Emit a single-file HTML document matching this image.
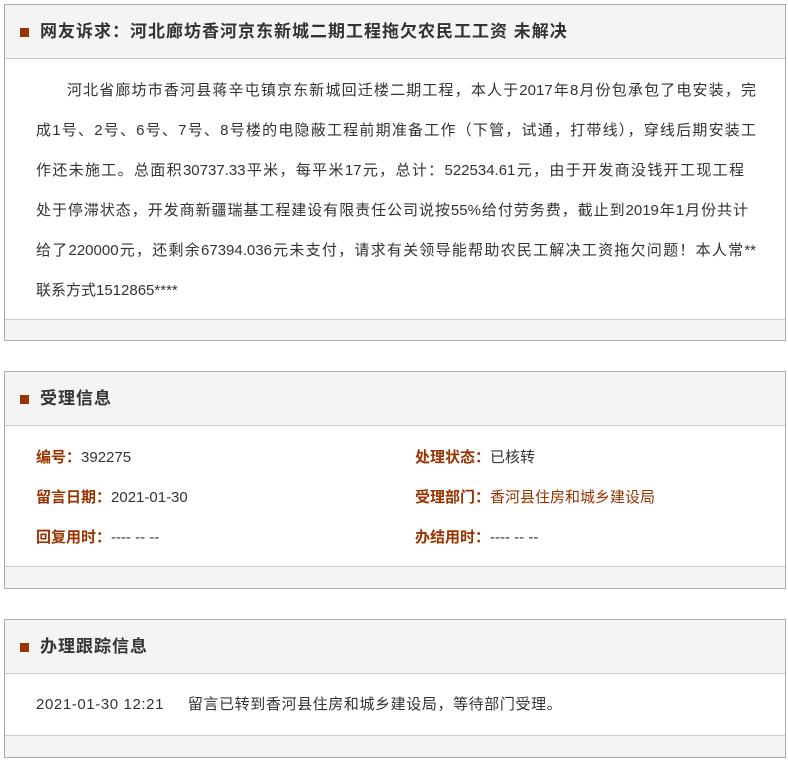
<!DOCTYPE html>
<html><head><meta charset="utf-8"><style>
*{margin:0;padding:0;box-sizing:border-box}
body{width:788px;height:762px;background:#fff;font-family:"Liberation Sans","Noto Sans CJK SC",sans-serif;color:#333;position:relative;overflow:hidden}
.box{position:absolute;left:4px;width:782px;border:1px solid #aaa;background:#f4f4f4}
.hd{height:54px;border-bottom:1px solid #ccc;position:relative;font-weight:bold;font-size:17px;letter-spacing:1px;color:#333;line-height:54px;padding-left:35px}
.hd:before{content:"";position:absolute;left:15px;top:23px;width:9px;height:9px;background:#993300}
.bd{background:#fff;border-bottom:1px solid #ccc;font-size:15px}
.ln{white-space:nowrap;height:40px;line-height:40px}
.j{text-align:justify;text-align-last:justify;white-space:normal;width:720px}
.lab{color:#993300;font-weight:bold}
.col{position:absolute}
</style></head><body>
<div class="box" style="top:4px;height:337px">
<div class="hd">网友诉求：河北廊坊香河京东新城二期工程拖欠农民工工资 未解决</div>
<div class="bd" style="height:261px;padding:12px 0 0 31px">
<div class="ln j" style="padding-left:31px">河北省廊坊市香河县蒋辛屯镇京东新城回迁楼二期工程，本人于2017年8月份包承包了电安装，完</div>
<div class="ln j">成1号、2号、6号、7号、8号楼的电隐蔽工程前期准备工作（下管，试通，打带线），穿线后期安装工</div>
<div class="ln j" style="width:708px">作还未施工。总面积30737.33平米，每平米17元，总计：522534.61元，由于开发商没钱开工现工程</div>
<div class="ln j" style="width:712px">处于停滞状态，开发商新疆瑞基工程建设有限责任公司说按55%给付劳务费，截止到2019年1月份共计</div>
<div class="ln j">给了220000元，还剩余67394.036元未支付，请求有关领导能帮助农民工解决工资拖欠问题！本人常**</div>
<div class="ln">联系方式1512865****</div>
</div>
</div>
<div class="box" style="top:371px;height:218px">
<div class="hd">受理信息</div>
<div class="bd" style="height:141px;position:relative">
<div class="col" style="left:31px;top:12px">
<div class="ln"><span class="lab">编号：</span>392275</div>
<div class="ln"><span class="lab">留言日期：</span>2021-01-30</div>
<div class="ln"><span class="lab">回复用时：</span>---- -- --</div>
</div>
<div class="col" style="left:410px;top:12px">
<div class="ln"><span class="lab">处理状态：</span>已核转</div>
<div class="ln"><span class="lab">受理部门：</span><span style="color:#993300">香河县住房和城乡建设局</span></div>
<div class="ln"><span class="lab">办结用时：</span>---- -- --</div>
</div>
</div>
</div>
<div class="box" style="top:619px;height:139px">
<div class="hd">办理跟踪信息</div>
<div class="bd" style="height:62px;padding:11px 0 0 31px">
<div class="ln" style="letter-spacing:0.6px">2021-01-30 12:21&nbsp;&nbsp;&nbsp;&nbsp;&nbsp;留言已转到香河县住房和城乡建设局，等待部门受理。</div>
</div>
</div>
</body></html>
